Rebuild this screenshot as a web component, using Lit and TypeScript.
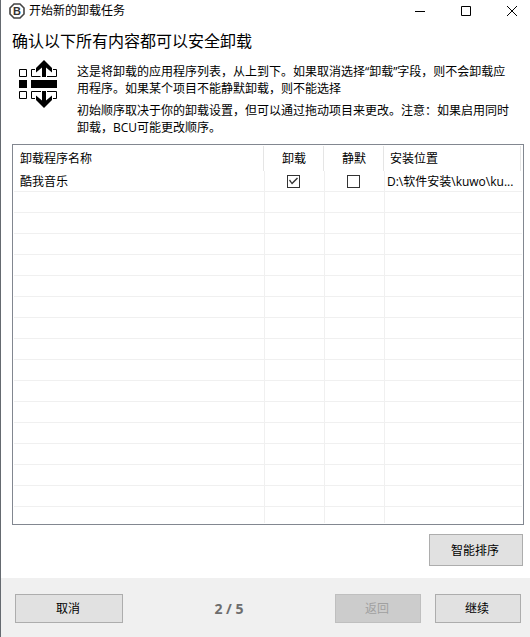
import { LitElement, html, css } from "lit";
import { customElement, state } from "lit/decorators.js";

interface Entry {
  name: string;
  uninstall: boolean;
  quiet: boolean;
  location: string;
}

@customElement("app-root")
export class AppRoot extends LitElement {
  @state() private entries: Entry[] = [
    { name: "酷我音乐", uninstall: true, quiet: false, location: "D:\\软件安装\\kuwo\\ku..." },
  ];

  static styles = css`
    :host {
      display: flex;
      flex-direction: column;
      box-sizing: border-box;
      min-height: 100vh;
      border-left: 1px solid #656a70;
      background: #fff;
      color: #000;
      font: 12px/17px "Open Sans", "Noto Sans CJK SC", sans-serif;
    }
    * {
      box-sizing: border-box;
    }
    .titlebar {
      display: flex;
      align-items: center;
      height: 21px;
      padding: 0 3px 0 8px;
    }
    .logo {
      width: 16px;
      height: 16px;
      margin-right: 4px;
    }
    .title {
      flex: 1;
    }
    .controls {
      display: flex;
      gap: 16px;
    }
    .control {
      display: flex;
      justify-content: center;
      align-items: center;
      width: 30px;
      height: 20px;
      padding: 0;
      border: 0;
      background: none;
    }
    .control svg {
      width: 12px;
      height: 12px;
    }
    h1 {
      margin: 8px 11px 0;
      font-size: 16px;
      line-height: 24px;
      font-weight: 400;
    }
    .intro {
      display: flex;
      gap: 20px;
      padding: 7px 14px 0 18px;
    }
    .order-icon {
      flex: none;
      width: 38px;
      height: 48px;
    }
    .copy {
      flex: 1;
      padding-top: 3px;
    }
    p {
      margin: 0 0 5px;
    }
    main {
      flex: 1;
      display: flex;
      flex-direction: column;
      padding: 3px 6px 12px 11px;
    }
    .list {
      padding: 0 1px 1px;
      border: 1px solid #828790;
    }
    table {
      width: 100%;
      table-layout: fixed;
      border-collapse: separate;
      border-spacing: 0;
    }
    .col-name {
      width: 251px;
    }
    .col-flag {
      width: 60px;
    }
    th {
      height: 26px;
      padding: 0 5px;
      font-weight: 400;
      text-align: left;
      background: linear-gradient(#e5e5e5, #e5e5e5) right 1px top 1px / 1px 25px no-repeat;
    }
    th:first-child {
      padding-left: 6px;
    }
    td {
      height: 21px;
      padding: 2px 2px 0 6px;
      line-height: 18px;
      border-right: 1px solid #f0f0f0;
      border-bottom: 1px solid #f0f0f0;
      white-space: nowrap;
    }
    td:last-child {
      padding-left: 2px;
      padding-right: 0;
      border-right: 0;
    }
    th.flag,
    td.flag {
      padding: 0 2px 0 0;
      text-align: center;
    }
    tr:last-child td {
      height: 16px;
      padding: 0;
      border-bottom: 0;
    }
    .check {
      appearance: none;
      display: block;
      width: 13px;
      height: 13px;
      margin: 0 auto;
      border: 1px solid #333;
      background: #fff;
    }
    .check:checked::before {
      content: "";
      display: block;
      width: 11px;
      height: 11px;
      background: #333;
      clip-path: polygon(1px 5px, 2px 4px, 4px 7px, 9px 2px, 10px 3px, 4px 9px);
    }
    .btn {
      height: 29px;
      padding: 0 2px 0 0;
      border: 1px solid #adadad;
      border-radius: 0;
      background: #e1e1e1;
      color: #000;
      font: inherit;
    }
    .btn:disabled {
      border-color: #bfbfbf;
      background: #ccc;
      color: #a0a0a0;
    }
    .sort {
      align-self: flex-end;
      width: 94px;
      height: 32px;
      margin: 9px 1px 0 0;
    }
    footer {
      display: flex;
      align-items: center;
      gap: 14px;
      padding: 16px 9px 14px 14px;
      background: #f0f0f0;
    }
    .cancel {
      width: 108px;
    }
    .step {
      flex: 1;
      text-align: center;
      font-size: 14px;
      font-weight: 700;
      color: #6d6d6d;
    }
    .nav {
      width: 86px;
    }
  `;

  private toggle(index: number, key: "uninstall" | "quiet") {
    this.entries = this.entries.map((e, i) => (i === index ? { ...e, [key]: !e[key] } : e));
  }

  render() {
    const blanks = Array.from({ length: 17 - this.entries.length });
    return html`
      <header class="titlebar">
        <svg class="logo" viewBox="0 0 16 16" aria-hidden="true">
          <path d="M5 1h6l4 4v6l-4 4H5l-4-4V5z" fill="#fff" stroke="#444" stroke-width="1.600" />
          <text x="8" y="12" text-anchor="middle" font-family="Liberation Sans, sans-serif" font-size="11" font-weight="700" fill="#333">B</text>
        </svg>
        <span class="title">开始新的卸载任务</span>
        <div class="controls">
          <button class="control" aria-label="最小化">
            <svg viewBox="0 0 12 12"><path d="M1 6.500h10" stroke="#000" fill="none" /></svg>
          </button>
          <button class="control" aria-label="最大化">
            <svg viewBox="0 0 12 12"><path d="M1.500 1.500h9v9h-9z" stroke="#000" fill="none" /></svg>
          </button>
          <button class="control" aria-label="关闭">
            <svg viewBox="0 0 12 12"><path d="M1 1l10 10M11 1L1 11" stroke="#000" fill="none" /></svg>
          </button>
        </div>
      </header>
      <h1>确认以下所有内容都可以安全卸载</h1>
      <section class="intro">
        <svg class="order-icon" viewBox="0 0 38 48" aria-hidden="true">
          <path d="M.5 9.500h7v7h-7zM.5 31.500h7v7h-7zM16 9.500h-3.500v7h9M28 16.500h9.500v-7H34M22 31.500h-9.500v7H16M28 31.500h9.500v7H34" fill="none" stroke="#000" />
          <path d="M0 20h8v8H0zM12 20h26v8H12zM25 0l8 8v4.500l-6-5V17h-4V7.500l-6 5V8zM25 48l8-8v-4.500l-6 5V31h-4v9.500l-6-5V40z" />
        </svg>
        <div class="copy">
          <p>这是将卸载的应用程序列表，从上到下。如果取消选择“卸载”字段，则不会卸载应用程序。如果某个项目不能静默卸载，则不能选择</p>
          <p>初始顺序取决于你的卸载设置，但可以通过拖动项目来更改。注意：如果启用同时卸载，BCU可能更改顺序。</p>
        </div>
      </section>
      <main>
        <div class="list">
          <table>
            <colgroup>
              <col class="col-name" />
              <col class="col-flag" />
              <col class="col-flag" />
              <col />
            </colgroup>
            <thead>
              <tr>
                <th>卸载程序名称</th>
                <th class="flag">卸载</th>
                <th class="flag">静默</th>
                <th>安装位置</th>
              </tr>
            </thead>
            <tbody>
              ${this.entries.map(
                (e, i) => html`<tr>
                  <td>${e.name}</td>
                  <td class="flag">
                    <input class="check" type="checkbox" aria-label="卸载" .checked=${e.uninstall} @change=${() => this.toggle(i, "uninstall")} />
                  </td>
                  <td class="flag">
                    <input class="check" type="checkbox" aria-label="静默" .checked=${e.quiet} @change=${() => this.toggle(i, "quiet")} />
                  </td>
                  <td>${e.location}</td>
                </tr>`
              )}
              ${blanks.map(() => html`<tr><td></td><td></td><td></td><td></td></tr>`)}
            </tbody>
          </table>
        </div>
        <button class="btn sort">智能排序</button>
      </main>
      <footer>
        <button class="btn cancel">取消</button>
        <span class="step">2 / 5</span>
        <button class="btn nav" disabled>返回</button>
        <button class="btn nav">继续</button>
      </footer>
    `;
  }
}
